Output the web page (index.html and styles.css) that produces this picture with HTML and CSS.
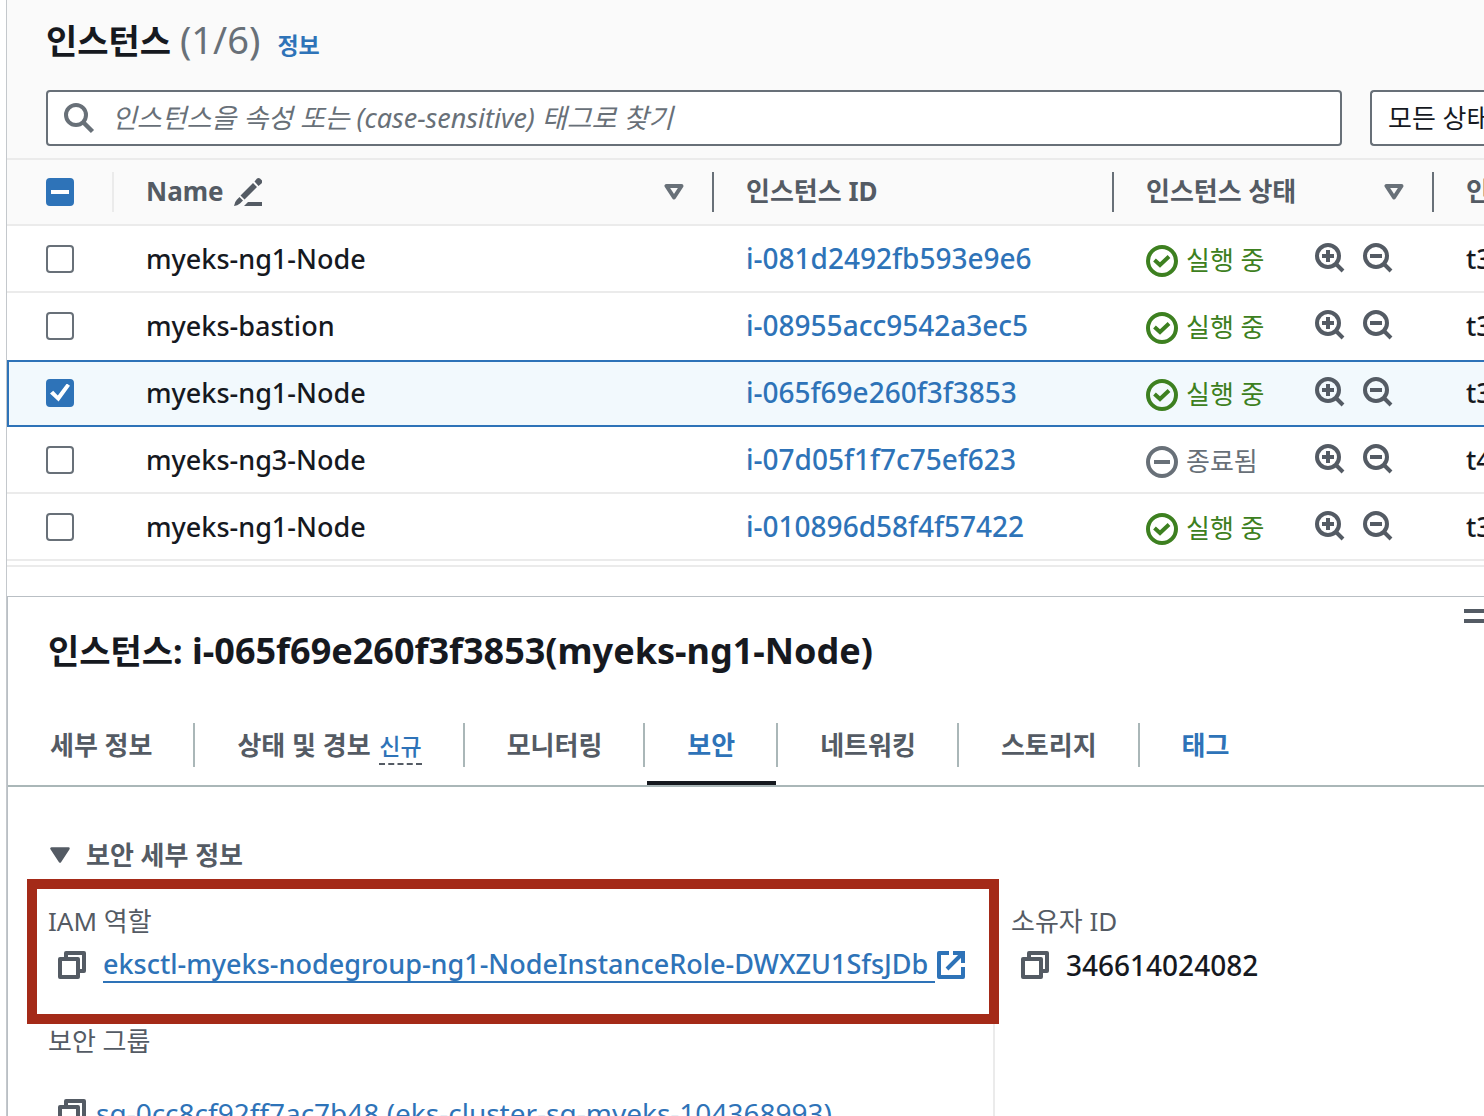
FILE: index.html
```html
<!DOCTYPE html>
<html lang="ko">
<head>
<meta charset="utf-8">
<title>인스턴스</title>
<link rel="stylesheet" href="styles.css">
</head>
<body>
<svg class="sprite" aria-hidden="true">
  <symbol id="i-zoom-in" viewBox="0 0 32 32"><g fill="none" stroke="currentColor" stroke-width="4"><circle cx="14" cy="13" r="11"/><path d="M21.5 20.5l7.5 7.5M8 13h12M14 7v12"/></g></symbol>
  <symbol id="i-zoom-out" viewBox="0 0 32 32"><g fill="none" stroke="currentColor" stroke-width="4"><circle cx="14" cy="13" r="11"/><path d="M21.5 20.5l7.5 7.5M8 13h12"/></g></symbol>
  <symbol id="i-ok" viewBox="0 0 32 32"><g fill="none" stroke="currentColor" stroke-width="4"><circle cx="16" cy="16" r="14"/><path d="M8.5 15l5.5 5 9-8.500"/></g></symbol>
  <symbol id="i-stopped" viewBox="0 0 32 32"><g fill="none" stroke="currentColor" stroke-width="4"><circle cx="16" cy="16" r="14"/><path d="M8 16h16"/></g></symbol>
  <symbol id="i-copy" viewBox="0 0 28 28"><g fill="none" stroke="currentColor" stroke-width="4" stroke-linejoin="round"><path d="M8 7V2h18v18h-5"/><path d="M2 8h18v18H2z"/></g></symbol>
  <symbol id="i-sort" viewBox="0 0 20 16"><path d="M2.500 2h15L10 13.500z" fill="none" stroke="currentColor" stroke-width="4" stroke-linejoin="round"/></symbol>
</svg>

<main class="app">
  <header class="list-head">
    <div class="title-row">
      <h1 class="title">인스턴스 <span class="count">(1/6)</span></h1>
      <a class="info" href="#">정보</a>
    </div>
    <div class="filters">
      <label class="search">
        <svg class="search-icon" viewBox="0 0 32 32" aria-hidden="true"><g fill="none" stroke="currentColor" stroke-width="4"><circle cx="12" cy="13" r="10"/><path d="M19 20l9.500 9.500" stroke-width="4.500"/></g></svg>
        <input type="text" aria-label="찾기" placeholder="인스턴스을 속성 또는 (case-sensitive) 태그로 찾기">
      </label>
      <select class="state-filter" aria-label="모든 상태"><option>모든 상태</option></select>
    </div>
  </header>

  <table class="instances">
    <colgroup><col class="c-check"><col class="c-name"><col class="c-id"><col class="c-state"><col></colgroup>
    <thead>
      <tr>
        <th><div class="th faint"><input type="checkbox" class="check mixed" aria-label="인스턴스"></div></th>
        <th><div class="th"><span>Name</span>
          <svg class="pencil" viewBox="0 0 28 28" fill="currentColor" aria-hidden="true"><path d="M6.500 17.500L19 5l4 4-12.500 12.500zM20.500 3.500l2.500-3q1.500-1 3 0l2 2q.5 1.500-.5 3l-3 2.500zM5.500 19l3.500 3.500-3 3q-2.500 2-6 2.500.5-4 3-6.500zM14 24h14v4H10z"/></svg>
          <svg class="sort"><use href="#i-sort"/></svg></div></th>
        <th><div class="th"><span>인스턴스 ID</span></div></th>
        <th><div class="th"><span>인스턴스 상태</span><svg class="sort"><use href="#i-sort"/></svg></div></th>
        <th><div class="th last"><span>인</span></div></th>
      </tr>
    </thead>
    <tbody>
      <tr>
        <td><input type="checkbox" class="check" aria-label="i-081d2492fb593e9e6"></td>
        <td>myeks-ng1-Node</td>
        <td class="id"><a href="#">i-081d2492fb593e9e6</a></td>
        <td><div class="state"><span class="status ok"><svg><use href="#i-ok"/></svg><span>실행 중</span></span><button aria-label="+"><svg><use href="#i-zoom-in"/></svg></button><button aria-label="-"><svg><use href="#i-zoom-out"/></svg></button></div></td>
        <td>t3</td>
      </tr>
      <tr class="before-selected">
        <td><input type="checkbox" class="check" aria-label="i-08955acc9542a3ec5"></td>
        <td>myeks-bastion</td>
        <td class="id"><a href="#">i-08955acc9542a3ec5</a></td>
        <td><div class="state"><span class="status ok"><svg><use href="#i-ok"/></svg><span>실행 중</span></span><button aria-label="+"><svg><use href="#i-zoom-in"/></svg></button><button aria-label="-"><svg><use href="#i-zoom-out"/></svg></button></div></td>
        <td>t3</td>
      </tr>
      <tr class="selected">
        <td><input type="checkbox" class="check" checked aria-label="i-065f69e260f3f3853"></td>
        <td>myeks-ng1-Node</td>
        <td class="id"><a href="#">i-065f69e260f3f3853</a></td>
        <td><div class="state"><span class="status ok"><svg><use href="#i-ok"/></svg><span>실행 중</span></span><button aria-label="+"><svg><use href="#i-zoom-in"/></svg></button><button aria-label="-"><svg><use href="#i-zoom-out"/></svg></button></div></td>
        <td>t3</td>
      </tr>
      <tr>
        <td><input type="checkbox" class="check" aria-label="i-07d05f1f7c75ef623"></td>
        <td>myeks-ng3-Node</td>
        <td class="id"><a href="#">i-07d05f1f7c75ef623</a></td>
        <td><div class="state"><span class="status"><svg><use href="#i-stopped"/></svg><span>종료됨</span></span><button aria-label="+"><svg><use href="#i-zoom-in"/></svg></button><button aria-label="-"><svg><use href="#i-zoom-out"/></svg></button></div></td>
        <td>t4</td>
      </tr>
      <tr>
        <td><input type="checkbox" class="check" aria-label="i-010896d58f4f57422"></td>
        <td>myeks-ng1-Node</td>
        <td class="id"><a href="#">i-010896d58f4f57422</a></td>
        <td><div class="state"><span class="status ok"><svg><use href="#i-ok"/></svg><span>실행 중</span></span><button aria-label="+"><svg><use href="#i-zoom-in"/></svg></button><button aria-label="-"><svg><use href="#i-zoom-out"/></svg></button></div></td>
        <td>t3</td>
      </tr>
    </tbody>
  </table>
  <div class="table-end"></div>

  <section class="panel">
    <div class="grip-row"><button class="grip" aria-label="="></button></div>
    <h2 class="panel-title"><span class="ko">인스턴스:</span> i-065f69e260f3f3853(myeks-ng1-Node)</h2>
    <nav>
      <ul class="tabs">
        <li><button>세부 정보</button></li>
        <li><button>상태 및 경보 <span class="new">신규</span></button></li>
        <li><button>모니터링</button></li>
        <li><button class="active">보안</button></li>
        <li><button>네트워킹</button></li>
        <li><button>스토리지</button></li>
        <li><button class="blue">태그</button></li>
      </ul>
    </nav>
    <div class="details">
      <h3 class="section-title"><svg viewBox="0 0 20 16" aria-hidden="true"><path d="M1.500 1.500h17L10 14.500z" fill="currentColor" stroke="currentColor" stroke-width="2.500" stroke-linejoin="round"/></svg>보안 세부 정보</h3>
      <div class="columns">
        <dl class="column">
          <dt>IAM 역할</dt>
          <dd class="role"><svg class="copy"><use href="#i-copy"/></svg><a class="underlined" href="#">eksctl-myeks-nodegroup-ng1-NodeInstanceRole-DWXZU1SfsJDb</a><svg class="external" viewBox="0 0 28 28" aria-hidden="true"><g fill="none" stroke="currentColor" stroke-width="4"><path d="M12 2H2v24h24V16" stroke-linejoin="round"/><path d="M16 2h10v10M25 3L10 18"/></g></svg></dd>
          <dt>보안 그룹</dt>
          <dd class="group"><svg class="copy"><use href="#i-copy"/></svg><a href="#">sg-0cc8cf92ff7ac7b48 (eks-cluster-sg-myeks-104368993)</a></dd>
        </dl>
        <dl class="column second">
          <dt>소유자 ID</dt>
          <dd class="owner"><svg class="copy"><use href="#i-copy"/></svg>346614024082</dd>
        </dl>
      </div>
      <div class="highlight"></div>
    </div>
  </section>
</main>
</body>
</html>
```
FILE: styles.css
```css
* { box-sizing: border-box; }
body {
  margin: 0;
  height: 100vh;
  overflow: hidden;
  background: #fff;
  color: #16191f;
  font: 500 27px/40px "Noto Sans", "Noto Sans CJK KR", sans-serif;
}
h1, h2, h3, ul, dl, dd { margin: 0; padding: 0; }
a { color: #2e73b8; text-decoration: none; }
button { margin: 0; padding: 0; border: 0; background: none; color: inherit; font: inherit; }
input, select { font-family: inherit; }
svg { flex: none; display: block; }
.sprite { position: absolute; width: 0; height: 0; }

.app { margin-left: 6px; border-left: 1px solid #c4c8cc; }

/* List header */
.list-head { padding: 15px 0 12px 39px; background: #fafafa; border-bottom: 2px solid #ebebeb; }
.title-row { display: flex; align-items: baseline; gap: 17px; height: 48px; }
.title { font-size: 34px; font-weight: 700; line-height: 48px; }
.count { font-size: 38px; font-weight: 400; color: #687078; }
.info { font-size: 23px; font-weight: 700; line-height: 32px; }
.filters { display: flex; gap: 28px; margin-top: 27px; }
.search {
  flex: 1;
  display: flex;
  align-items: center;
  gap: 16px;
  height: 56px;
  padding: 0 16px;
  border: 2px solid #687078;
  border-radius: 4px;
  background: #fff;
  color: #687078;
}
.search-icon { width: 32px; height: 32px; }
.search input {
  flex: 1;
  min-width: 0;
  padding: 0;
  border: 0;
  outline: 0;
  background: none;
  font-size: 27px;
  font-style: italic;
  line-height: 40px;
}
.search input::placeholder { color: #687078; opacity: 1; }
.state-filter {
  appearance: none;
  width: 114px;
  height: 56px;
  padding: 0 0 0 16px;
  border: 2px solid #687078;
  border-right: 0;
  border-radius: 4px 0 0 4px;
  background: #fff;
  color: #16191f;
  font-size: 26px;
  line-height: 40px;
}

/* Table */
.instances { width: 100%; table-layout: fixed; border-collapse: separate; border-spacing: 0; }
.c-check { width: 107px; }
.c-name { width: 600px; }
.c-id { width: 400px; }
.c-state { width: 320px; }
.instances th, .instances td {
  height: 67px;
  padding: 0 0 0 32px;
  border-bottom: 2px solid #ebebeb;
  text-align: left;
  white-space: nowrap;
  overflow: hidden;
}
.instances th { height: 66px; background: #fafafa; color: #545b64; }
.instances th:first-child, .instances td:first-child { padding-left: 39px; }
.th {
  display: flex;
  align-items: center;
  height: 40px;
  border-right: 2px solid #687078;
  font-size: 26px;
  font-weight: 700;
}
.th span { padding-bottom: 2px; }
.th.faint { border-color: #ebebeb; }
.th.last { border: 0; }
.pencil { width: 28px; height: 28px; margin-left: 10px; }
.sort { width: 20px; height: 16px; margin-left: auto; margin-right: 28px; color: #687078; }
.instances .id { padding-bottom: 1px; font-size: 28px; }
.before-selected td { border-bottom-color: #fff; }
.selected td { background: #f2f9fd; box-shadow: inset 0 2px #2e73b8; border-bottom-color: #2e73b8; }
.selected td:first-child { box-shadow: inset 2px 2px #2e73b8; }
.table-end { height: 31px; margin-top: 4px; border-top: 2px solid #ebebeb; }

.check {
  appearance: none;
  display: block;
  width: 28px;
  height: 28px;
  margin: 0;
  border: 2px solid #687078;
  border-radius: 4px;
  background: #fff;
}
.check.mixed, .check:checked { display: grid; place-items: center; border-color: #2e73b8; background: #2e73b8; }
.check.mixed::after { content: ""; width: 18px; height: 4px; background: #fff; }
.check:checked::after {
  content: "";
  width: 20px;
  height: 18px;
  background: #fff;
  clip-path: polygon(0 55%, 16% 40%, 39% 66%, 84% 0, 100% 12%, 43% 100%);
}

.state { display: flex; align-items: center; gap: 16px; color: #545b64; }
.state button svg, .status svg { width: 32px; height: 32px; }
.status {
  display: flex;
  align-items: center;
  gap: 8px;
  width: 152px;
  padding-top: 4px;
  color: #687078;
  font-size: 26px;
  font-weight: 400;
}
.status span { padding-bottom: 2px; }
.status.ok { color: #3d8020; }

/* Detail panel */
.panel { border-top: 1px solid #b9bfc4; border-left: 1px solid #b9bfc4; }
.grip-row { display: flex; justify-content: flex-end; height: 30px; padding-top: 12px; }
.grip { width: 20px; height: 14px; border: solid #545b64; border-width: 4px 0; }
.panel-title { padding-left: 40px; font-size: 36px; line-height: 48px; white-space: nowrap; }
.panel-title .ko { font-size: 34px; }
.tabs {
  display: flex;
  height: 82px;
  margin-top: 30px;
  border-bottom: 2px solid #aab7b8;
  list-style: none;
}
.tabs li { display: flex; align-items: center; }
.tabs li:not(:last-child)::after { content: ""; width: 2px; height: 44px; background: #aab7b8; }
.tabs button {
  height: 80px;
  margin-left: 2px;
  padding: 0 41px 0 40px;
  border: solid transparent;
  border-width: 4px 0;
  color: #545b64;
  font-size: 26px;
  font-weight: 700;
  white-space: nowrap;
}
.tabs .active { color: #2e73b8; border-bottom-color: #16191f; }
.tabs .blue { color: #2e73b8; }
.new { display: inline-block; margin-left: 2px; border-bottom: 2px dashed #545b64; color: #2e73b8; font-size: 23px; line-height: 34px; font-weight: 500; }

.details { position: relative; padding: 48px 0 0 40px; }
.section-title {
  display: flex;
  align-items: center;
  gap: 16px;
  padding-left: 2px;
  color: #545b64;
  font-size: 26px;
}
.section-title svg { width: 20px; height: 16px; }
.columns { display: grid; grid-template-columns: 945px 1fr; margin-top: 24px; }
.column dt { color: #545b64; font-size: 26px; font-weight: 400; line-height: 44px; }
.column dd { display: flex; align-items: center; height: 44px; padding-left: 10px; white-space: nowrap; }
.column .role { margin-bottom: 32px; }
.column .group { margin-top: 28px; gap: 10px; font-size: 28px; font-weight: 400; }
.column .owner { gap: 17px; font-size: 28px; }
.second { padding-left: 16px; border-left: 2px solid #ebebeb; }
.copy { width: 28px; height: 28px; color: #545b64; }
.underlined { margin: 0 2px 0 17px; padding-right: 7px; line-height: 34px; border-bottom: 2px solid #2e73b8; }
.external { width: 28px; height: 28px; color: #2e73b8; }
.highlight { position: absolute; left: 19px; top: 92px; width: 972px; height: 145px; border: 10px solid #a42a18; }
```
